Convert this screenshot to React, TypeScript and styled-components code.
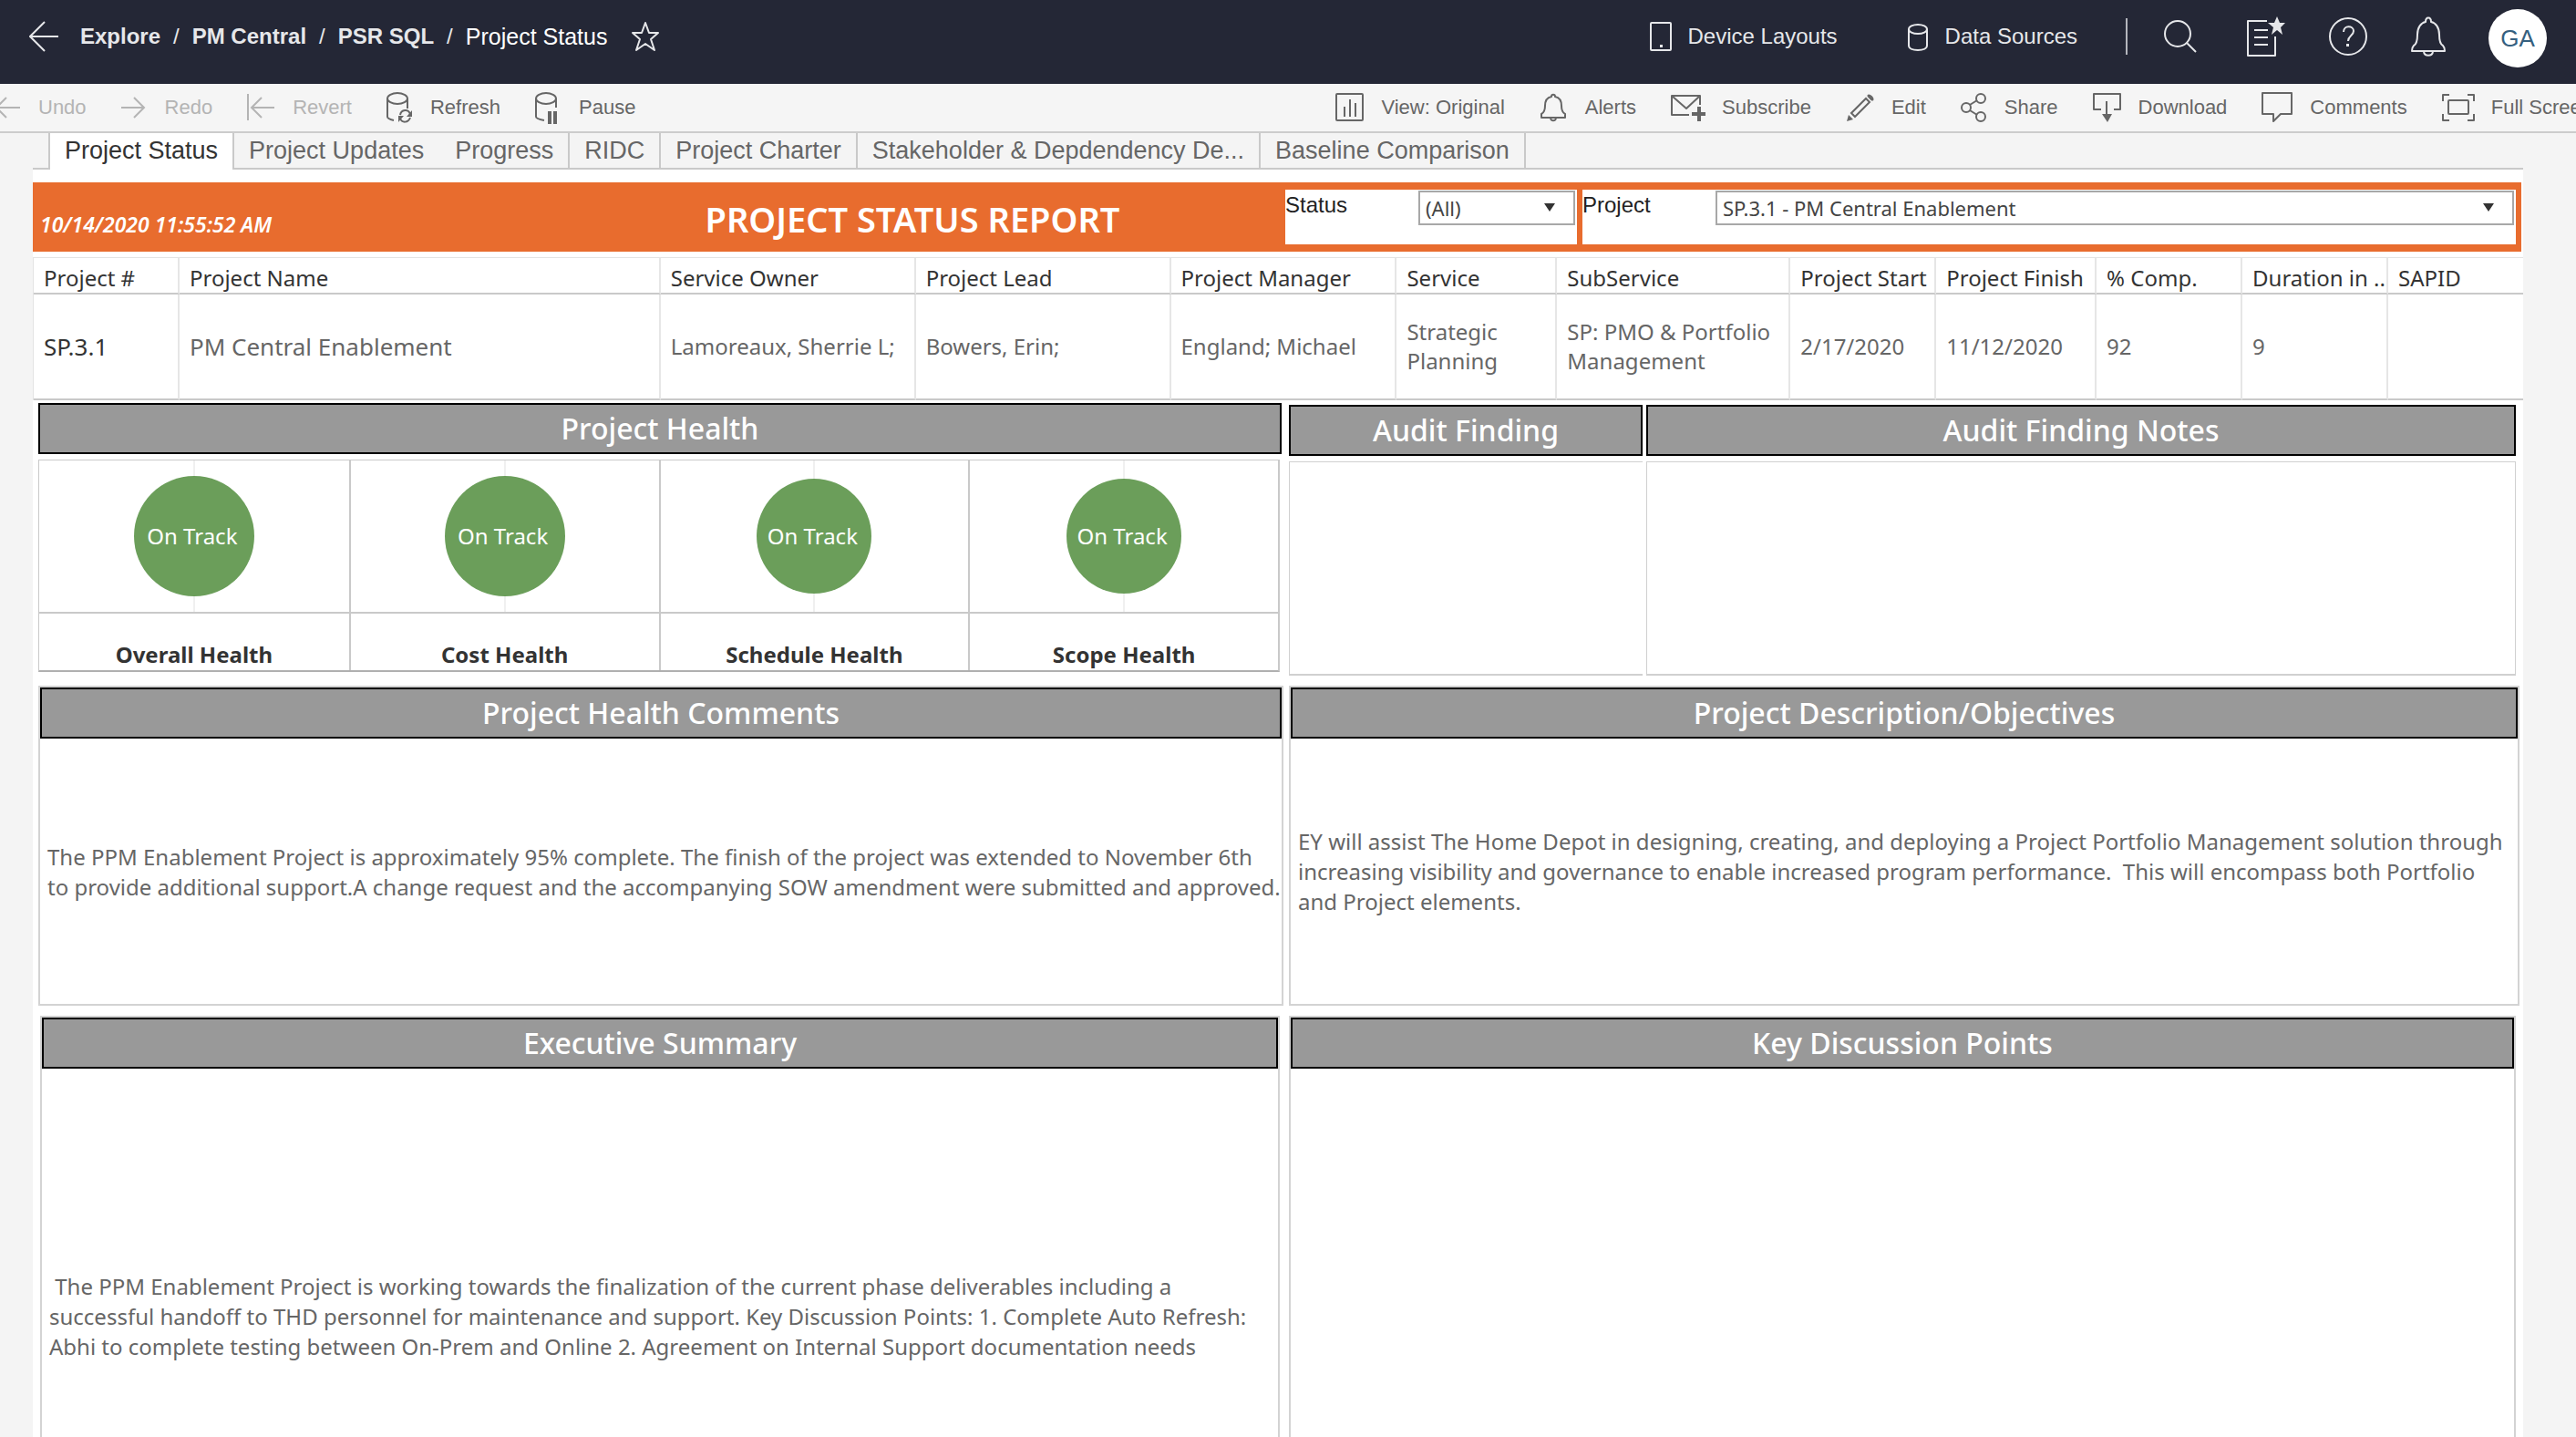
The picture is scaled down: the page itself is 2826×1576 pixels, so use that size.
import React from "react";
import styled, { createGlobalStyle } from "styled-components";

const UI = '"Liberation Sans", Arial, sans-serif';
const REPORT = '"Noto Sans", "Open Sans", sans-serif';

const GlobalStyle = createGlobalStyle`
  *, *::before, *::after { box-sizing: border-box; }
  body { margin: 0; background: #f4f4f4; font-family: ${UI}; }
  button, select { font: inherit; color: inherit; }
  a { color: inherit; text-decoration: none; }
`;

const Page = styled.div`
  min-height: 100vh;
  max-height: 100vh;
  overflow: hidden;
`;

/* ---------- top navigation ---------- */

const TopBar = styled.header`
  display: flex;
  align-items: center;
  justify-content: space-between;
  height: 92px;
  padding: 0 32px 12px;
  background: #242736;
  color: #e6e7ea;
  font-size: 24px;
  line-height: 32px;
`;

const Cluster = styled.div<{ $gap: number }>`
  display: flex;
  align-items: center;
  gap: ${(p) => p.$gap}px;
`;

const Crumbs = styled.nav`
  display: flex;
  align-items: center;
  gap: 14px;
`;

const CrumbLink = styled.a`
  font-weight: 700;
`;

const CrumbCurrent = styled.span`
  color: #fff;
  font-size: 25px;
`;

const IconButton = styled.button`
  display: flex;
  align-items: center;
  padding: 0;
  border: 0;
  background: none;
  cursor: pointer;
`;

const NavButton = styled(IconButton)`
  gap: 18px;
`;

const Divider = styled.span`
  width: 2px;
  height: 40px;
  background: #b4b6bd;
`;

const Avatar = styled.button`
  width: 64px;
  height: 64px;
  margin-top: 4px;
  padding: 0;
  border: 0;
  border-radius: 50%;
  background: #fff;
  color: #35607f;
  font-size: 26px;
`;

/* ---------- toolbar ---------- */

const Toolbar = styled.div`
  display: flex;
  justify-content: space-between;
  height: 54px;
  margin: 0 -18px 0 -6px;
  border-bottom: 2px solid #ccc;
  background: #f5f5f5;
  font-size: 22px;
`;

const ToolGroup = styled.div`
  display: flex;
  align-items: center;
  gap: 38px;
`;

const Tool = styled.button<{ $gap: number }>`
  display: flex;
  align-items: center;
  gap: ${(p) => p.$gap}px;
  height: 52px;
  padding: 0;
  border: 0;
  background: none;
  color: #666;
  white-space: nowrap;
  &:disabled { color: #b4b4b4; }
`;

/* ---------- sheet tabs ---------- */

const Sheet = styled.div`
  margin: 0 58px 0 36px;
`;

const Tabs = styled.div`
  display: flex;
  height: 40px;
  padding-left: 17px;
  background: linear-gradient(#c9c9c9, #c9c9c9) bottom / 100% 2px no-repeat;
`;

const Tab = styled.button<{ $divided: boolean }>`
  padding: 0 16px 2px;
  border: 0;
  border-right: 2px solid ${(p) => (p.$divided ? "#c9c9c9" : "transparent")};
  background: none;
  color: #666;
  font-size: 27px;
  line-height: 36px;
  white-space: nowrap;
  &[aria-selected="true"] {
    border-left: 2px solid #c9c9c9;
    background: #fff;
    color: #333;
  }
`;

/* ---------- report ---------- */

const Report = styled.main`
  padding-top: 14px;
  background: #fff;
  color: #333;
  font-family: ${REPORT};
  font-size: 24px;
  line-height: 32px;
`;

const Banner = styled.section`
  display: grid;
  grid-template-columns: 556fr 806fr 320fr 1024fr;
  height: 76px;
  margin-right: 2px;
  padding: 8px 6px 8px 0;
  column-gap: 6px;
  background: #e86c2e;
  color: #fff;
`;

const Stamp = styled.time`
  padding: 22px 0 0 8px;
  font-size: 23px;
  font-style: italic;
  font-weight: 600;
`;

const BannerTitle = styled.h1`
  margin: 0;
  padding-top: 4px;
  font-size: 38px;
  line-height: 56px;
  font-weight: 600;
  text-align: center;
`;

const Filter = styled.div<{ $label: number }>`
  display: grid;
  grid-template-columns: ${(p) => p.$label}px minmax(0, 1fr);
  padding: 1px 2px 0 0;
  background: #fff;
  color: #222;
`;

const FilterLabel = styled.label`
  font-family: ${UI};
  font-size: 24px;
  line-height: 32px;
`;

const SelectWrap = styled.div`
  position: relative;
  height: 38px;
  svg {
    position: absolute;
    top: 14px;
    right: 22px;
    pointer-events: none;
  }
`;

const Select = styled.select`
  appearance: none;
  width: 100%;
  height: 38px;
  padding: 0 6px;
  border: 2px solid #a8a8a8;
  border-radius: 0;
  background: #fff;
  color: #444;
  font-size: 22px;
`;

const ProjectTable = styled.table`
  width: 100%;
  margin-top: 6px;
  table-layout: fixed;
  border-collapse: separate;
  border-spacing: 0;
  border-top: 1px solid #e3e3e3;
  border-left: 1px solid #e3e3e3;
  text-align: left;
  th, td {
    padding: 0 0 0 11px;
    border-right: 2px solid #e6e6e6;
    border-bottom: 2px solid #c9c9c9;
  }
  th:last-child, td:last-child { border-right: 0; }
  th {
    height: 40px;
    padding-top: 6px;
    color: #333;
    font-weight: 400;
    white-space: nowrap;
  }
  td {
    height: 116px;
    color: #666;
  }
  td:first-child { color: #333; }
`;

const Value = styled.td<{ $large?: boolean }>`
  font-size: ${(p) => (p.$large ? 26 : 24)}px;
`;

const Columns = styled.div<{ $cols: string; $gap: number }>`
  display: grid;
  grid-template-columns: ${(p) => p.$cols};
  column-gap: ${(p) => p.$gap}px;
  align-items: start;
`;

const Board = styled.div`
  padding: 3px 4px 0 6px;
`;

const Heading = styled.h2`
  margin: 0;
  border: 2px solid #000;
  background: #999;
  color: #fff;
  font-size: 32px;
  line-height: 52px;
  font-weight: 500;
  text-align: center;
`;

const StatusRow = styled(Columns)`
  padding-right: 4px;
`;

const HealthBlock = styled.section`
  padding-right: 4px;
`;

const HealthGrid = styled.div`
  display: grid;
  grid-template-columns: repeat(4, minmax(0, 1fr));
  margin-top: 6px;
  margin-right: 2px;
  border: 1px solid #c9c9c9;
  border-width: 1px 2px 2px 1px;
  border-bottom-color: #b0b0b0;
`;

const HealthCell = styled.div`
  & + & { border-left: 2px solid #c9c9c9; }
`;

const DotArea = styled.div`
  display: flex;
  align-items: center;
  justify-content: center;
  height: 168px;
  border-bottom: 2px solid #c9c9c9;
  background: linear-gradient(#f0f0f0, #f0f0f0) center / 2px 100% no-repeat;
`;

const Dot = styled.div<{ $size: number }>`
  width: ${(p) => p.$size}px;
  height: ${(p) => p.$size}px;
  padding-right: 4px;
  border-radius: 50%;
  background: #6b9e5a;
  color: #fff;
  line-height: ${(p) => p.$size}px;
  text-align: center;
  white-space: nowrap;
`;

const HealthName = styled.div`
  padding-top: 29px;
  height: 62px;
  font-weight: 700;
  text-align: center;
`;

const AuditBlock = styled.section`
  padding-top: 2px;
`;

const AuditBody = styled.div<{ $open?: boolean }>`
  height: 235px;
  margin-top: 6px;
  border: 1px solid #d0d0d0;
  border-bottom-width: 2px;
  border-right-width: ${(p) => (p.$open ? 0 : 1)}px;
`;

const PanelRow = styled(Columns)<{ $inset?: boolean }>`
  margin-top: 11px;
  padding: ${(p) => (p.$inset ? "0 4px 0 2px" : "0")};
`;

const Panel = styled.section`
  border: 2px solid #d3d3d3;
`;

const PanelBody = styled.div<{ $height: number }>`
  display: flex;
  align-items: center;
  height: ${(p) => p.$height}px;
  padding: 0 0 0 8px;
  color: #666;
  line-height: 33px;
`;

const Copy = styled.p`
  margin: 0;
  white-space: pre-wrap;
`;

/* ---------- icons ---------- */

type IconProps = { w: number; h: number; sw?: number; children: React.ReactNode };

const Icon = ({ w, h, sw = 2, children }: IconProps) => (
  <svg width={w} height={h} viewBox={`0 0 ${w} ${h}`} fill="none" stroke="currentColor" strokeWidth={sw} aria-hidden="true">
    {children}
  </svg>
);

const BackIcon = () => (
  <Icon w={32} h={34}><path d="M17 1 1 17l16 16M1 17h31" /></Icon>
);
const StarIcon = () => (
  <Icon w={34} h={34}><path d="M18 2l4 11h10l-8 7 4 12-10-7-10 7 4-12-8-7h10z" strokeLinejoin="round" /></Icon>
);
const DeviceIcon = () => (
  <Icon w={24} h={34}><rect x="1" y="2" width="22" height="30" rx="1" /><rect x="11" y="26" width="3" height="3" fill="currentColor" stroke="none" /></Icon>
);
const DataIcon = () => (
  <Icon w={24} h={34}><ellipse cx="12" cy="9" rx="10" ry="5" /><path d="M2 9v18c0 3 4 5 10 5s10-2 10-5V9" /></Icon>
);
const SearchIcon = () => (
  <Icon w={36} h={38}><circle cx="15" cy="16" r="14" /><path d="M25 26l10 10" /></Icon>
);
const FavListIcon = () => (
  <Icon w={44} h={48}>
    <path d="M24 7H3v38h30V24M10 17h15M10 25h15M10 33h15" strokeLinejoin="round" />
    <path d="M35 2l3 7h6l-5 5 2 8-6-5-6 5 2-8-6-5h7z" fill="currentColor" stroke="none" />
  </Icon>
);
const HelpIcon = () => (
  <Icon w={44} h={44}>
    <circle cx="22" cy="22" r="20" />
    <path d="M17 17c0-8 11-7 11-1 0 5-6 5-6 11" /><rect x="20" y="30" width="3" height="3" fill="currentColor" stroke="none" />
  </Icon>
);
const NavBellIcon = () => (
  <Icon w={38} h={48}>
    <path d="M16 8c0-6 6-6 6 0 5 1 9 6 9 14 0 9 2 11 4 12 2 2 2 3 2 6H1c0-3 0-4 2-6 2-1 4-3 4-12 0-8 4-13 9-14zM14 41c1 5 9 5 10 0" strokeLinejoin="round" />
  </Icon>
);

const UndoIcon = () => <Icon w={28} h={32}><path d="M13 5 2 16l11 11M2 16h26" /></Icon>;
const RedoIcon = () => <Icon w={28} h={32}><path d="M14 5l11 11-11 11M25 16H-1" /></Icon>;
const RevertIcon = () => <Icon w={30} h={32}><path d="M1 1v29M16 5 5 16l11 11M5 16h25" /></Icon>;
const RefreshIcon = () => (
  <Icon w={28} h={34}>
    <ellipse cx="12" cy="7" rx="11" ry="6" /><path d="M1 7v20c0 2 3 3 7 4M23 7v11" />
    <path d="M15 25c1-6 9-7 11-1M26 28c-2 6-9 6-11 1" /><path d="M28 20v7h-6zM13 33v-7h6z" fill="currentColor" stroke="none" />
  </Icon>
);
const PauseIcon = () => (
  <Icon w={28} h={36}>
    <ellipse cx="12" cy="8" rx="11" ry="6" /><path d="M1 8v20c0 2 4 3 9 4M23 8v10" />
    <path d="M16 22v14M22 22v14" strokeWidth={4} />
  </Icon>
);
const ViewIcon = () => (
  <Icon w={32} h={32}><rect x="1" y="1" width="29" height="29" rx="1" /><path d="M10 15v11M16 7v19M22 11v15" /></Icon>
);
const AlertIcon = () => (
  <Icon w={32} h={32}>
    <path d="M13 4c0-3 4-3 4 0 5 1 7 5 7 10 0 6 2 8 4 9v4H2v-4c2-1 4-3 4-9 0-5 2-9 7-10zM12 28c1 3 5 3 6 0" strokeLinejoin="round" />
  </Icon>
);
const MailIcon = () => (
  <Icon w={38} h={32}>
    <path d="M20 24H1V3h31v10M1 3l16 14L32 3" strokeLinejoin="round" /><path d="M31 15v16M23 23h15" strokeWidth={4} />
  </Icon>
);
const PencilIcon = () => (
  <Icon w={32} h={32}>
    <path d="M6 22 22 6l4 4-16 16zM24 3c2-2 7 3 5 5M24 3l5 5" /><path d="M1 31l2-7 5 5z" fill="currentColor" stroke="none" />
  </Icon>
);
const ShareIcon = () => (
  <Icon w={30} h={34}>
    <circle cx="6" cy="17" r="5" /><circle cx="22" cy="7" r="5" /><circle cx="22" cy="27" r="5" /><path d="M10 14l8-5M10 20l8 5" />
  </Icon>
);
const DownloadIcon = () => (
  <Icon w={32} h={32}>
    <path d="M9 18H1V1h29v17h-7M15 9v16" strokeLinejoin="round" /><path d="M10 23h11l-5 9z" fill="currentColor" stroke="none" />
  </Icon>
);
const CommentIcon = () => (
  <Icon w={35} h={34}><path d="M1 1h32v23H21l-8 8v-8H1z" strokeLinejoin="round" /></Icon>
);
const FullIcon = () => (
  <Icon w={36} h={32}>
    <path d="M8 2H1v7M28 2h7v7M8 30H1v-7M28 30h7v-7" strokeLinejoin="round" /><rect x="7" y="8" width="22" height="15" rx="1" />
  </Icon>
);
const Caret = () => (
  <svg width="12" height="9" viewBox="0 0 12 9" aria-hidden="true"><path d="M0 0h12L6 9z" fill="#333" /></svg>
);

/* ---------- data ---------- */

const history = [
  { label: "Undo", icon: <UndoIcon />, off: true },
  { label: "Redo", icon: <RedoIcon />, off: true },
  { label: "Revert", icon: <RevertIcon />, off: true },
  { label: "Refresh", icon: <RefreshIcon />, off: false },
  { label: "Pause", icon: <PauseIcon />, off: false },
];

const actions = [
  { label: "View: Original", icon: <ViewIcon /> },
  { label: "Alerts", icon: <AlertIcon /> },
  { label: "Subscribe", icon: <MailIcon /> },
  { label: "Edit", icon: <PencilIcon /> },
  { label: "Share", icon: <ShareIcon /> },
  { label: "Download", icon: <DownloadIcon /> },
  { label: "Comments", icon: <CommentIcon /> },
  { label: "Full Screen", icon: <FullIcon /> },
];

const tabs = [
  { label: "Project Status", divided: true },
  { label: "Project Updates", divided: false },
  { label: "Progress", divided: true },
  { label: "RIDC", divided: true },
  { label: "Project Charter", divided: true },
  { label: "Stakeholder & Depdendency De...", divided: true },
  { label: "Baseline Comparison", divided: true },
];

const fields = [
  { name: "Project #", value: "SP.3.1", share: 160, large: true },
  { name: "Project Name", value: "PM Central Enablement", share: 528, large: true },
  { name: "Service Owner", value: "Lamoreaux, Sherrie L;", share: 280 },
  { name: "Project Lead", value: "Bowers, Erin;", share: 280 },
  { name: "Project Manager", value: "England; Michael", share: 248 },
  { name: "Service", value: "Strategic Planning", share: 176 },
  { name: "SubService", value: "SP: PMO & Portfolio Management", share: 256 },
  { name: "Project Start", value: "2/17/2020", share: 160 },
  { name: "Project Finish", value: "11/12/2020", share: 176 },
  { name: "% Comp.", value: "92", share: 160 },
  { name: "Duration in ..", value: "9", share: 160 },
  { name: "SAPID", value: "", share: 148 },
];
const shareTotal = fields.reduce((sum, f) => sum + f.share, 0);

const Col = styled.col<{ $share: number }>`
  width: ${(p) => (p.$share / shareTotal) * 100}%;
`;

const health = [
  { name: "Overall Health", state: "On Track", size: 132 },
  { name: "Cost Health", state: "On Track", size: 132 },
  { name: "Schedule Health", state: "On Track", size: 126 },
  { name: "Scope Health", state: "On Track", size: 126 },
];

const comments = `The PPM Enablement Project is approximately 95% complete. The finish of the project was extended to November 6th
to provide additional support.A change request and the accompanying SOW amendment were submitted and approved.`;
const objectives = `EY will assist The Home Depot in designing, creating, and deploying a Project Portfolio Management solution through
increasing visibility and governance to enable increased program performance.  This will encompass both Portfolio
and Project elements.`;
const summary = ` The PPM Enablement Project is working towards the finalization of the current phase deliverables including a
successful handoff to THD personnel for maintenance and support. Key Discussion Points: 1. Complete Auto Refresh:
Abhi to complete testing between On-Prem and Online 2. Agreement on Internal Support documentation needs`;

export default function App() {
  return (
    <Page>
      <GlobalStyle />
      <TopBar>
        <Cluster $gap={24}>
          <IconButton aria-label="Back"><BackIcon /></IconButton>
          <Crumbs aria-label="Breadcrumb">
            <CrumbLink href="#explore">Explore</CrumbLink>
            <span>/</span>
            <CrumbLink href="#pm-central">PM Central</CrumbLink>
            <span>/</span>
            <CrumbLink href="#psr-sql">PSR SQL</CrumbLink>
            <span>/</span>
            <CrumbCurrent>Project Status</CrumbCurrent>
          </Crumbs>
          <IconButton aria-label="Add to favorites"><StarIcon /></IconButton>
        </Cluster>
        <Cluster $gap={53}>
          <Cluster $gap={76}>
            <NavButton><DeviceIcon />Device Layouts</NavButton>
            <NavButton><DataIcon />Data Sources</NavButton>
          </Cluster>
          <Cluster $gap={40}>
            <Divider />
            <IconButton aria-label="Search"><SearchIcon /></IconButton>
          </Cluster>
          <Cluster $gap={47}>
            <IconButton aria-label="Favorites"><FavListIcon /></IconButton>
            <IconButton aria-label="Help"><HelpIcon /></IconButton>
            <IconButton aria-label="Notifications"><NavBellIcon /></IconButton>
            <Avatar>GA</Avatar>
          </Cluster>
        </Cluster>
      </TopBar>

      <Toolbar>
        <ToolGroup>
          {history.map((t) => (
            <Tool key={t.label} $gap={20} disabled={t.off}>{t.icon}{t.label}</Tool>
          ))}
        </ToolGroup>
        <ToolGroup>
          {actions.map((t) => (
            <Tool key={t.label} $gap={18}>{t.icon}{t.label}</Tool>
          ))}
        </ToolGroup>
      </Toolbar>

      <Sheet>
        <Tabs role="tablist">
          {tabs.map((t, i) => (
            <Tab key={t.label} role="tab" aria-selected={i === 0} $divided={t.divided}>{t.label}</Tab>
          ))}
        </Tabs>

        <Report>
          <Banner>
            <Stamp>10/14/2020 11:55:52 AM</Stamp>
            <BannerTitle>PROJECT STATUS REPORT</BannerTitle>
            <Filter $label={146}>
              <FilterLabel htmlFor="status">Status</FilterLabel>
              <SelectWrap>
                <Select id="status"><option>(All)</option></Select>
                <Caret />
              </SelectWrap>
            </Filter>
            <Filter $label={146}>
              <FilterLabel htmlFor="project">Project</FilterLabel>
              <SelectWrap>
                <Select id="project"><option>SP.3.1 - PM Central Enablement</option></Select>
                <Caret />
              </SelectWrap>
            </Filter>
          </Banner>

          <ProjectTable>
            <colgroup>{fields.map((f) => <Col key={f.name} $share={f.share} />)}</colgroup>
            <thead>
              <tr>{fields.map((f) => <th key={f.name} scope="col">{f.name}</th>)}</tr>
            </thead>
            <tbody>
              <tr>{fields.map((f) => <Value key={f.name} $large={f.large}>{f.value}</Value>)}</tr>
            </tbody>
          </ProjectTable>

          <Board>
            <StatusRow $cols="1368fr 388fr 954fr" $gap={4}>
              <HealthBlock>
                <Heading>Project Health</Heading>
                <HealthGrid>
                  {health.map((h) => (
                    <HealthCell key={h.name}>
                      <DotArea><Dot $size={h.size}>{h.state}</Dot></DotArea>
                      <HealthName>{h.name}</HealthName>
                    </HealthCell>
                  ))}
                </HealthGrid>
              </HealthBlock>
              <AuditBlock>
                <Heading>Audit Finding</Heading>
                <AuditBody $open />
              </AuditBlock>
              <AuditBlock>
                <Heading>Audit Finding Notes</Heading>
                <AuditBody />
              </AuditBlock>
            </StatusRow>

            <PanelRow $cols="1366fr 1350fr" $gap={6}>
              <Panel>
                <Heading>Project Health Comments</Heading>
                <PanelBody $height={291}><Copy>{comments}</Copy></PanelBody>
              </Panel>
              <Panel>
                <Heading>Project Description/Objectives</Heading>
                <PanelBody $height={291}><Copy>{objectives}</Copy></PanelBody>
              </Panel>
            </PanelRow>

            <PanelRow $cols="1360fr 1346fr" $gap={10} $inset>
              <Panel>
                <Heading>Executive Summary</Heading>
                <PanelBody $height={543}><Copy>{summary}</Copy></PanelBody>
              </Panel>
              <Panel>
                <Heading>Key Discussion Points</Heading>
                <PanelBody $height={543} />
              </Panel>
            </PanelRow>
          </Board>
        </Report>
      </Sheet>
    </Page>
  );
}
